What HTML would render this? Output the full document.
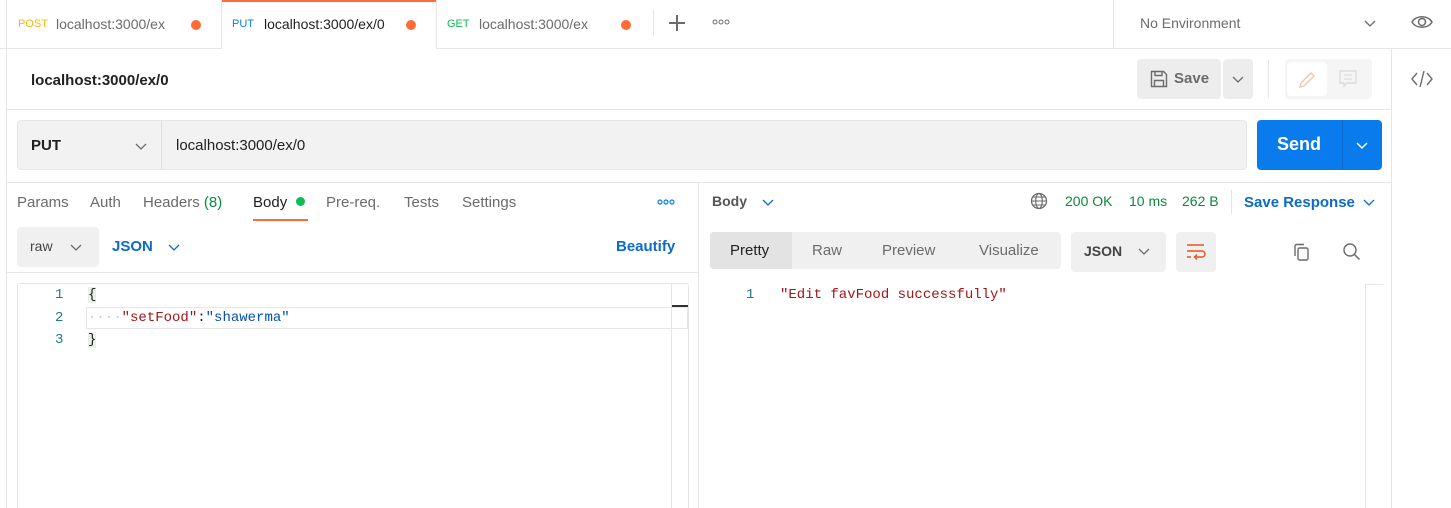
<!DOCTYPE html>
<html style="overflow:hidden;height:508px"><head><meta charset="utf-8"><style>
*{margin:0;padding:0;box-sizing:border-box}
body{width:1451px;height:508px;overflow:hidden;background:#fff;font-family:"Liberation Sans",sans-serif;position:relative;color:#212121}
.a{position:absolute}
.t{font-size:14px;white-space:nowrap}
.mono{font-family:"Liberation Mono",monospace;font-size:14px;white-space:nowrap}
.ln{background:#e6e6e6}
.dot{width:10px;height:10px;border-radius:50%;background:#ff6c37}
</style></head><body>
<div class="a ln" style="left:6px;top:0;width:1px;height:508px"></div>
<div class="a ln" style="left:0;top:48px;width:1451px;height:1px"></div>
<div class="a ln" style="left:1391px;top:48px;width:1px;height:460px"></div>
<div class="a ln" style="left:221px;top:0;width:1px;height:48px"></div>
<div class="a" style="left:222px;top:0;width:214px;height:49px;background:#fff;border-top:2px solid #ff6c37"></div>
<div class="a ln" style="left:436px;top:0;width:1px;height:48px"></div>
<div class="a t" style="left:18px;top:18px;font-size:11px;color:#ffb400">POST</div>
<div class="a t" style="left:56px;top:16px;color:#6b6b6b">localhost:3000/ex</div>
<div class="a dot" style="left:191px;top:20px"></div>
<div class="a t" style="left:232px;top:18px;font-size:11px;color:#097bed">PUT</div>
<div class="a t" style="left:264px;top:16px;color:#212121">localhost:3000/ex/0</div>
<div class="a dot" style="left:406px;top:20px"></div>
<div class="a t" style="left:447px;top:18px;font-size:11px;color:#0cbb52">GET</div>
<div class="a t" style="left:479px;top:16px;color:#6b6b6b">localhost:3000/ex</div>
<div class="a dot" style="left:621px;top:20px"></div>
<div class="a ln" style="left:653px;top:10px;width:1px;height:26px"></div>
<div class="a" style="left:669px;top:22px;width:16px;height:1.5px;background:#6b6b6b"></div>
<div class="a" style="left:676px;top:15px;width:1.5px;height:16px;background:#6b6b6b"></div>
<svg class="a" style="left:712px;top:19px" width="20" height="6"><circle cx="3" cy="3" r="2" fill="none" stroke="#6b6b6b" stroke-width="1"/><circle cx="9" cy="3" r="2" fill="none" stroke="#6b6b6b" stroke-width="1"/><circle cx="15" cy="3" r="2" fill="none" stroke="#6b6b6b" stroke-width="1"/></svg>
<div class="a ln" style="left:1113px;top:0;width:1px;height:48px"></div>
<div class="a t" style="left:1140px;top:15px;color:#6b6b6b">No Environment</div>
<svg class="a" style="left:1364px;top:18px" width="12" height="10"><path d="M1 3l5 5 5-5" fill="none" stroke="#6b6b6b" stroke-width="1.3"/></svg>
<svg class="a" style="left:1411px;top:13px" width="22" height="18"><path d="M1 9C5 2 17 2 21 9 17 16 5 16 1 9z" fill="none" stroke="#6b6b6b" stroke-width="1.5"/><circle cx="11" cy="9" r="3.5" fill="none" stroke="#6b6b6b" stroke-width="1.5"/></svg>
<div class="a t" style="left:31px;top:72px;font-size:15px;font-weight:bold;color:#212121">localhost:3000/ex/0</div>
<div class="a ln" style="left:6px;top:109px;width:1385px;height:1px"></div>
<div class="a" style="left:1137px;top:59px;width:84px;height:40px;background:#ededed;border-radius:4px"></div>
<svg class="a" style="left:1150px;top:70px" width="18" height="18"><path d="M1.5 1.5h12l3 3v12h-15z" fill="none" stroke="#6b6b6b" stroke-width="1.4"/><path d="M5 1.5v4h7v-4M4.5 16.5v-6h9v6" fill="none" stroke="#6b6b6b" stroke-width="1.4"/></svg>
<div class="a t" style="left:1174px;top:70px;font-size:15px;font-weight:bold;color:#6b6b6b">Save</div>
<div class="a" style="left:1223px;top:59px;width:30px;height:40px;background:#ededed;border-radius:4px"></div>
<svg class="a" style="left:1232px;top:74px" width="12" height="10"><path d="M1 3l5 5 5-5" fill="none" stroke="#6b6b6b" stroke-width="1.3"/></svg>
<div class="a ln" style="left:1268px;top:60px;width:1px;height:38px"></div>
<div class="a" style="left:1285px;top:59px;width:87px;height:40px;background:#f5f5f5;border-radius:4px"></div>
<div class="a" style="left:1287px;top:62px;width:40px;height:34px;background:#fff;border-radius:4px"></div>
<svg class="a" style="left:1297px;top:70px" width="20" height="20"><path d="M3 17l1-4L14 3l3 3L7 16z" fill="none" stroke="#f8c2ae" stroke-width="1.4"/></svg>
<svg class="a" style="left:1338px;top:69px" width="20" height="20"><path d="M2 2h16v12H9l-3 3v-3H2z" fill="none" stroke="#dcdcdc" stroke-width="1.4"/><path d="M6 6h8M6 10h8" stroke="#dcdcdc" stroke-width="1.3"/></svg>
<svg class="a" style="left:1411px;top:70px" width="22" height="18"><path d="M6 3L1 9l5 6M16 3l5 6-5 6M13 1L9 17" fill="none" stroke="#6b6b6b" stroke-width="1.4"/></svg>
<div class="a" style="left:17px;top:120px;width:1230px;height:50px;background:#f2f2f2;border:1px solid #e6e6e6;border-radius:4px"></div>
<div class="a" style="left:161px;top:121px;width:1px;height:48px;background:#e0e0e0"></div>
<div class="a t" style="left:31px;top:137px;font-size:15px;font-weight:bold">PUT</div>
<svg class="a" style="left:135px;top:141px" width="12" height="10"><path d="M1 3l5 5 5-5" fill="none" stroke="#6b6b6b" stroke-width="1.3"/></svg>
<div class="a t" style="left:176px;top:137px;font-size:15px">localhost:3000/ex/0</div>
<div class="a" style="left:1257px;top:120px;width:125px;height:50px;background:#097bed;border-radius:4px"></div>
<div class="a" style="left:1342px;top:120px;width:1px;height:50px;background:#0a6ad0"></div>
<div class="a t" style="left:1277px;top:134px;font-size:18px;font-weight:bold;color:#fff">Send</div>
<svg class="a" style="left:1356px;top:140px" width="12" height="10"><path d="M1 3l5 5 5-5" fill="none" stroke="#fff" stroke-width="1.5"/></svg>
<div class="a ln" style="left:6px;top:182px;width:1385px;height:1px"></div>
<div class="a ln" style="left:698px;top:182px;width:1px;height:326px"></div>
<div class="a t" style="left:17px;top:194px;font-size:15px;color:#6b6b6b">Params</div>
<div class="a t" style="left:90px;top:194px;font-size:15px;color:#6b6b6b">Auth</div>
<div class="a t" style="left:143px;top:194px;font-size:15px;color:#6b6b6b">Headers <span style="color:#0b8a3c">(8)</span></div>
<div class="a t" style="left:253px;top:194px;font-size:15px;color:#212121">Body</div>
<div class="a" style="left:296px;top:197px;width:9px;height:9px;border-radius:50%;background:#0cbb52"></div>
<div class="a" style="left:253px;top:219px;width:55px;height:2px;background:#ff6c37"></div>
<div class="a t" style="left:326px;top:194px;font-size:15px;color:#6b6b6b">Pre-req.</div>
<div class="a t" style="left:404px;top:194px;font-size:15px;color:#6b6b6b">Tests</div>
<div class="a t" style="left:462px;top:194px;font-size:15px;color:#6b6b6b">Settings</div>
<svg class="a" style="left:657px;top:199px" width="20" height="6"><circle cx="3" cy="3" r="2" fill="none" stroke="#097bed" stroke-width="1.2"/><circle cx="9" cy="3" r="2" fill="none" stroke="#097bed" stroke-width="1.2"/><circle cx="15" cy="3" r="2" fill="none" stroke="#097bed" stroke-width="1.2"/></svg>
<div class="a" style="left:17px;top:227px;width:82px;height:40px;background:#f0f0f0;border-radius:4px"></div>
<div class="a t" style="left:30px;top:238px;color:#444">raw</div>
<svg class="a" style="left:70px;top:242px" width="12" height="10"><path d="M1 3l5 5 5-5" fill="none" stroke="#6b6b6b" stroke-width="1.3"/></svg>
<div class="a t" style="left:112px;top:238px;font-size:15px;font-weight:bold;color:#0b6bcb">JSON</div>
<svg class="a" style="left:168px;top:242px" width="12" height="10"><path d="M1 3l5 5 5-5" fill="none" stroke="#0b6bcb" stroke-width="1.3"/></svg>
<div class="a t" style="left:616px;top:238px;font-size:15px;font-weight:bold;color:#0b6bcb">Beautify</div>
<div class="a ln" style="left:6px;top:272px;width:692px;height:1px"></div>
<div class="a" style="left:17px;top:283px;width:672px;height:225px;border:1px solid #e6e6e6;border-bottom:none;border-radius:3px 3px 0 0"></div>
<div class="a ln" style="left:671px;top:283px;width:1px;height:225px"></div>
<div class="a" style="left:672px;top:305px;width:16px;height:2px;background:#333"></div>
<div class="a" style="left:86px;top:307px;width:602px;height:22px;border:1px solid #e6e6e6"></div>
<div class="a mono" style="left:55px;top:287px;color:#237893">1</div>
<div class="a mono" style="left:55px;top:310px;color:#237893">2</div>
<div class="a mono" style="left:55px;top:332px;color:#237893">3</div>
<div class="a mono" style="left:88px;top:287px;background:#e8f0e8">{</div>
<div class="a mono" style="left:88px;top:310px"><span style="color:#ccc">····</span><span style="color:#a31515">"setFood"</span>:<span style="color:#0451a5">"shawerma"</span></div>
<div class="a mono" style="left:88px;top:332px;background:#e8f0e8">}</div>
<div class="a t" style="left:712px;top:193px;font-weight:bold;color:#555;font-size:14px">Body</div>
<svg class="a" style="left:762px;top:197px" width="12" height="10"><path d="M1 3l5 5 5-5" fill="none" stroke="#0b6bcb" stroke-width="1.3"/></svg>
<svg class="a" style="left:1030px;top:192px" width="18" height="18"><circle cx="9" cy="9" r="7.5" fill="none" stroke="#6b6b6b" stroke-width="1.3"/><ellipse cx="9" cy="9" rx="3.3" ry="7.5" fill="none" stroke="#6b6b6b" stroke-width="1.2"/><path d="M1.5 9h15M3 5h12M3 13h12" stroke="#6b6b6b" stroke-width="1.1"/></svg>
<div class="a t" style="left:1065px;top:193px;color:#0b8a3c">200 OK</div>
<div class="a t" style="left:1129px;top:193px;color:#0b8a3c">10 ms</div>
<div class="a t" style="left:1182px;top:193px;color:#0b8a3c">262 B</div>
<div class="a ln" style="left:1231px;top:190px;width:1px;height:24px"></div>
<div class="a t" style="left:1244px;top:194px;font-size:15px;font-weight:bold;color:#0b6bcb">Save Response</div>
<svg class="a" style="left:1363px;top:197px" width="12" height="10"><path d="M1 3l5 5 5-5" fill="none" stroke="#0b6bcb" stroke-width="1.3"/></svg>
<div class="a" style="left:710px;top:232px;width:351px;height:37px;background:#f0f0f0;border-radius:4px"></div>
<div class="a" style="left:710px;top:232px;width:82px;height:37px;background:#e3e3e3;border-radius:4px 0 0 4px"></div>
<div class="a t" style="left:730px;top:242px;font-size:15px;color:#212121">Pretty</div>
<div class="a t" style="left:812px;top:242px;font-size:15px;color:#6b6b6b">Raw</div>
<div class="a t" style="left:882px;top:242px;font-size:15px;color:#6b6b6b">Preview</div>
<div class="a t" style="left:979px;top:242px;font-size:15px;color:#6b6b6b">Visualize</div>
<div class="a" style="left:1071px;top:232px;width:95px;height:40px;background:#f0f0f0;border-radius:4px"></div>
<div class="a t" style="left:1084px;top:243px;font-weight:bold;color:#444">JSON</div>
<svg class="a" style="left:1138px;top:246px" width="12" height="10"><path d="M1 3l5 5 5-5" fill="none" stroke="#6b6b6b" stroke-width="1.3"/></svg>
<div class="a" style="left:1176px;top:232px;width:40px;height:40px;background:#f0f0f0;border-radius:4px"></div>
<svg class="a" style="left:1186px;top:242px" width="20" height="20"><path d="M1 3h17M1 9h15a3 3 0 010 6H9M1 15h4" fill="none" stroke="#e2561f" stroke-width="1.4"/><path d="M11 12.5l-2.5 2.5 2.5 2.5" fill="none" stroke="#e2561f" stroke-width="1.4"/></svg>
<svg class="a" style="left:1292px;top:242px" width="20" height="20"><rect x="6" y="6" width="10" height="12" rx="1.5" fill="none" stroke="#6b6b6b" stroke-width="1.4"/><path d="M3 14V4a1.5 1.5 0 011.5-1.5H12" fill="none" stroke="#6b6b6b" stroke-width="1.4"/></svg>
<svg class="a" style="left:1342px;top:242px" width="20" height="20"><circle cx="8" cy="8" r="6" fill="none" stroke="#6b6b6b" stroke-width="1.4"/><path d="M12.5 12.5l5 5" stroke="#6b6b6b" stroke-width="1.5"/></svg>
<div class="a ln" style="left:1365px;top:284px;width:1px;height:224px"></div>
<div class="a ln" style="left:1365px;top:284px;width:18px;height:1px"></div>
<div class="a mono" style="left:746px;top:287px;color:#237893">1</div>
<div class="a mono" style="left:780px;top:287px;color:#a31515">"Edit favFood successfully"</div>
</body></html>
